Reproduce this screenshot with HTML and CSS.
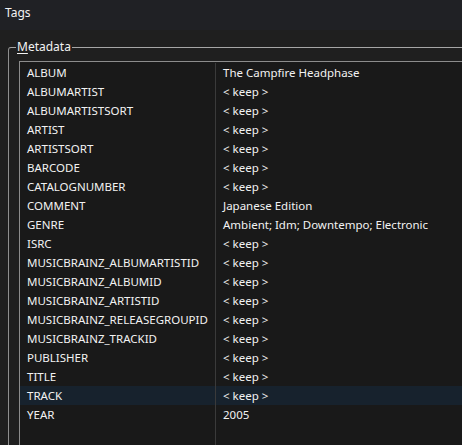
FILE: index.html
```html
<!DOCTYPE html>
<html>
<head>
<meta charset="utf-8">
<link rel="stylesheet" href="styles.css">
</head>
<body>
<div class="page">
  <div class="header">Tags</div>
  <div class="group">
    <div class="legend"><u>M</u>etadata</div>
    <div class="list">
      <div class="row"><div class="k">ALBUM</div><div class="v">The Campfire Headphase</div></div>
      <div class="row"><div class="k">ALBUMARTIST</div><div class="v">&lt; keep &gt;</div></div>
      <div class="row"><div class="k">ALBUMARTISTSORT</div><div class="v">&lt; keep &gt;</div></div>
      <div class="row"><div class="k">ARTIST</div><div class="v">&lt; keep &gt;</div></div>
      <div class="row"><div class="k">ARTISTSORT</div><div class="v">&lt; keep &gt;</div></div>
      <div class="row"><div class="k">BARCODE</div><div class="v">&lt; keep &gt;</div></div>
      <div class="row"><div class="k">CATALOGNUMBER</div><div class="v">&lt; keep &gt;</div></div>
      <div class="row"><div class="k">COMMENT</div><div class="v">Japanese Edition</div></div>
      <div class="row"><div class="k">GENRE</div><div class="v">Ambient; Idm; Downtempo; Electronic</div></div>
      <div class="row"><div class="k">ISRC</div><div class="v">&lt; keep &gt;</div></div>
      <div class="row"><div class="k">MUSICBRAINZ_ALBUMARTISTID</div><div class="v">&lt; keep &gt;</div></div>
      <div class="row"><div class="k">MUSICBRAINZ_ALBUMID</div><div class="v">&lt; keep &gt;</div></div>
      <div class="row"><div class="k">MUSICBRAINZ_ARTISTID</div><div class="v">&lt; keep &gt;</div></div>
      <div class="row"><div class="k">MUSICBRAINZ_RELEASEGROUPID</div><div class="v">&lt; keep &gt;</div></div>
      <div class="row"><div class="k">MUSICBRAINZ_TRACKID</div><div class="v">&lt; keep &gt;</div></div>
      <div class="row"><div class="k">PUBLISHER</div><div class="v">&lt; keep &gt;</div></div>
      <div class="row"><div class="k">TITLE</div><div class="v">&lt; keep &gt;</div></div>
      <div class="row sel"><div class="k">TRACK</div><div class="v">&lt; keep &gt;</div></div>
      <div class="row"><div class="k">YEAR</div><div class="v">2005</div></div>
      <div class="row empty"><div class="k"></div><div class="v"></div></div>
      <div class="row empty"><div class="k"></div><div class="v"></div></div>
    </div>
  </div>
</div>
</body>
</html>
```
FILE: styles.css
```css
html, body {
  margin: 0;
  padding: 0;
  background: #1f1f1f;
  overflow: hidden;
}
.page {
  width: 462px;
  height: 445px;
  font-family: "Noto Sans", "DejaVu Sans", sans-serif;
  font-size: 11.5px;
  color: #f2f2f2;
  overflow: hidden;
}
.header {
  height: 30px;
  background: #202125;
  padding: 4px 0 0 5px;
  box-sizing: border-box;
  line-height: 17px;
  font-size: 12px;
}
.group {
  position: relative;
  margin: 17px 0 0 8px;
  border-top: 1px solid #a6a6a6;
  border-left: 1px solid #8f8f8f;
  border-top-left-radius: 3px;
  padding: 13px 0 0 10px;
}
.legend {
  position: absolute;
  top: -10px;
  left: 7px;
  padding: 0 1px;
  background: #1f1f1f;
  line-height: 18px;
  font-size: 12px;
  color: #f2f2f2;
}
.legend u {
  text-decoration-thickness: 1px;
  text-underline-offset: 2px;
}
.list {
  border-top: 1px solid #8c8c8c;
  border-left: 1px solid #8c8c8c;
  background: #191919;
  padding-top: 1px;
}
.row {
  display: grid;
  grid-template-columns: 196px 1fr;
  height: 19px;
  line-height: 19px;
}
.row.sel {
  background: #17222d;
}
.k {
  padding-left: 7px;
  border-right: 1px solid #3a3a3a;
  white-space: nowrap;
  overflow: hidden;
}
.v {
  padding-left: 7px;
  white-space: nowrap;
  overflow: hidden;
}
```
